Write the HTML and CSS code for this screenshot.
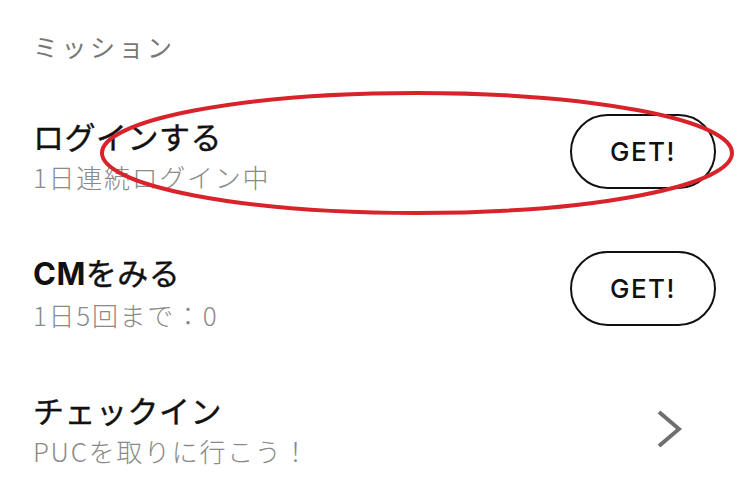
FILE: index.html
```html
<!DOCTYPE html>
<html lang="ja">
<head>
<meta charset="utf-8">
<link rel="stylesheet" href="styles.css">
</head>
<body>
<div class="page">
  <div class="section-title">ミッション</div>
  <div class="row">
    <div class="texts">
      <div class="title">ログインする</div>
      <div class="sub">1日連続ログイン中</div>
    </div>
    <div class="action"><button class="get">GET!</button></div>
  </div>
  <div class="row">
    <div class="texts">
      <div class="title"><b class="latin">CM</b>をみる</div>
      <div class="sub">1日5回まで：0</div>
    </div>
    <div class="action"><button class="get">GET!</button></div>
  </div>
  <div class="row">
    <div class="texts">
      <div class="title">チェックイン</div>
      <div class="sub">PUCを取りに行こう！</div>
    </div>
    <div class="action chev-wrap">
      <svg class="chev" width="26" height="40" viewBox="0 0 26 40"><polyline points="3,3 23,20 3,37" fill="none" stroke="#6f6f6f" stroke-width="4" stroke-linecap="butt" stroke-linejoin="miter"/></svg>
    </div>
  </div>
  <svg class="annot" width="743" height="498" viewBox="0 0 743 498"><ellipse cx="417" cy="153" rx="315" ry="60" fill="none" stroke="#d9232b" stroke-width="4"/></svg>
</div>
</body>
</html>
```
FILE: styles.css
```css
html, body {
  margin: 0;
  padding: 0;
  background: #ffffff;
}
.page {
  position: relative;
  width: 743px;
  height: 498px;
  overflow: hidden;
  font-family: "Noto Sans CJK JP", "Noto Sans", sans-serif;
  padding: 0 27px 0 33px;
  box-sizing: border-box;
}
.section-title {
  height: 86px;
  line-height: 92px;
  font-size: 25px;
  letter-spacing: 3.5px;
  color: #777777;
}
.row {
  height: 137px;
  display: flex;
  align-items: center;
  justify-content: space-between;
}
.texts {
  display: flex;
  flex-direction: column;
  padding-top: 4px;
}
.title {
  font-size: 31px;
  line-height: 40px;
  color: #111111;
  font-weight: 400;
  letter-spacing: 0.5px;
  -webkit-text-stroke: 0.4px #111111;
}
.latin {
  font-family: "Inter", sans-serif;
  font-weight: 700;
  letter-spacing: 0.5px;
  -webkit-text-stroke: 0;
}
.sub {
  font-size: 26px;
  line-height: 41px;
  color: #8a8a8a;
  font-weight: 300;
  letter-spacing: 1.7px;
}
.action {
  width: 146px;
  display: flex;
  justify-content: center;
}
.get {
  width: 146px;
  height: 75px;
  border: 2px solid #111111;
  border-radius: 38px;
  background: #ffffff;
  font-family: "Inter", sans-serif;
  font-weight: 500;
  font-size: 26px;
  letter-spacing: 1.5px;
  color: #111111;
  padding: 0;
  margin-top: -6px;
}
.chev-wrap {
  justify-content: flex-end;
  padding-right: 34px;
  box-sizing: border-box;
}
.annot {
  position: absolute;
  left: 0;
  top: 0;
  pointer-events: none;
}
```
